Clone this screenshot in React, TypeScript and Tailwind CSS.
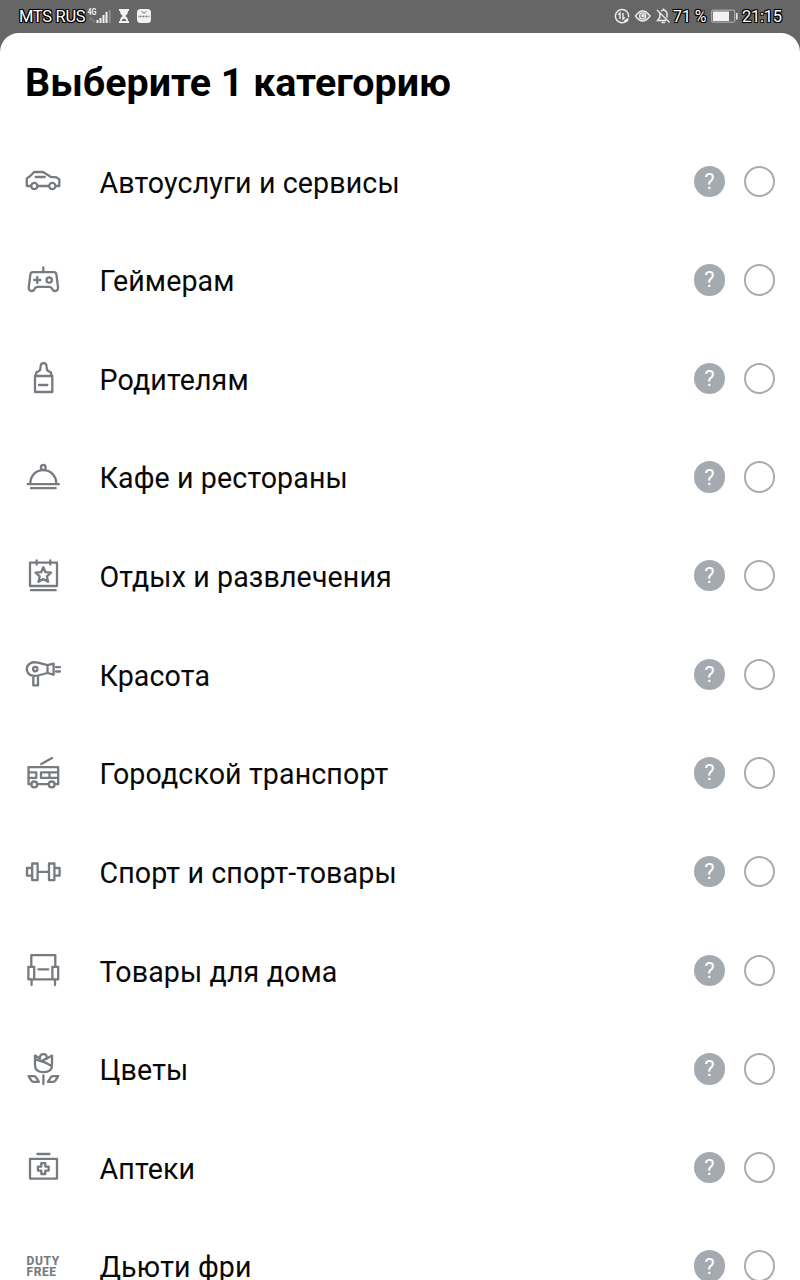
import type { ReactNode } from "react";

const categories: { label: string; icon: ReactNode }[] = [
  {
    label: "Автоуслуги и сервисы",
    icon: (
      <>
        <path d="M6 23H1.8V15.4L5 13.2L9.2 9H18L25.6 13.8L31.5 14.4L34.3 16.4V23H30.5M12.6 23H24" />
        <path d="M10.7 14H19.7" />
        <circle cx="9.3" cy="23" r="3.1" />
        <circle cx="27.3" cy="23" r="3.1" />
      </>
    ),
  },
  {
    label: "Геймерам",
    icon: (
      <>
        <path d="M18.3 5.4V10M8 10.2H28.8Q31 10.2 31.4 12.4L33 25Q33.4 29 30 29Q28.4 29 27.6 27.6L26.6 26Q25.8 24.9 24.4 24.9H12.4Q11 24.9 10.2 26L9.2 27.6Q8.4 29 6.8 29Q3.4 29 3.8 25L5.4 12.4Q5.8 10.2 8 10.2Z" />
        <path d="M9.2 18H15.4M12.3 14.9V21.1" />
        <circle cx="24.2" cy="18" r="2.7" />
      </>
    ),
  },
  {
    label: "Родителям",
    icon: (
      <>
        <path d="M10 16H27.3V32H10ZM14 25H22.3" />
        <path d="M11 16V14Q11 11.6 13.2 11.3C15.8 10.8 15.2 9.2 15.6 6.4Q15.8 3.2 18.6 3.2Q21.4 3.2 21.6 6.4C22 9.2 21.4 10.8 24 11.3Q26.2 11.6 26.2 14V16" />
      </>
    ),
  },
  {
    label: "Кафе и рестораны",
    icon: (
      <>
        <path d="M2.8 25.2H33.8M5.3 25C5.3 6.6 31.3 6.6 31.3 25M6 29.2H30.7" />
        <circle cx="18.3" cy="8.4" r="2.4" />
      </>
    ),
  },
  {
    label: "Отдых и развлечения",
    icon: (
      <>
        <path d="M5 4.6H32V28H5ZM11.7 2.4V6.6M25.3 2.4V6.6M6 32.2H30.7" />
        <path d="M18.3 9.2L20.5 14.2L26 14.7L21.9 18.3L23.1 23.8L18.3 20.9L13.5 23.8L14.7 18.3L10.6 14.7L16.1 14.2Z" />
      </>
    ),
  },
  {
    label: "Красота",
    icon: (
      <>
        <path d="M22.5 9.2L13 6.7C6.5 5.1 1.8 8.2 1.8 13.1C1.8 18 6.5 21.1 13 19.5L22.5 17M22.5 9.2V17L28.6 18.6V7.6ZM31 11.1H35M31 15.5H35M8.3 20V29.4H13V20" />
        <circle cx="10.3" cy="13.1" r="2.2" />
      </>
    ),
  },
  {
    label: "Городской транспорт",
    icon: (
      <>
        <path d="M16.3 9.1L27 3.1M6 29.2H3.5V12.2H33.2V29.2H30M12.6 29.2H23.4M3.5 17.4H11.3V22.9H3.5M33.2 17.4H16V22.9H33.2M24.5 17.4V22.9" />
        <circle cx="9.3" cy="29.4" r="2.9" />
        <circle cx="26.7" cy="29.4" r="2.9" />
      </>
    ),
  },
  {
    label: "Спорт и спорт-товары",
    icon: (
      <path d="M7.2 9.5H12.6V26.2H7.2ZM24 9.5H29.4V26.2H24ZM7.2 14H2V21.6H7.2M29.4 14H34.6V21.6H29.4M12.6 17.8H24" />
    ),
  },
  {
    label: "Товары для дома",
    icon: (
      <path d="M6.3 14.8V3.2H30.3V14.8M3.4 14.8H9.2V27.4H3.4ZM27.4 14.8H33.2V27.4H27.4ZM9.2 27.4H27.4M6.6 27.4V33M30 27.4V33M13.3 17.3H23.3" />
    ),
  },
  {
    label: "Цветы",
    icon: (
      <>
        <path d="M15 7.4L10 4.6V13.7Q10 21.2 18.5 21.2Q27 21.2 27 13.7V4.6L21.8 7.4L16 10.2M10 7.6Q12 9.2 15 9.8Q20 10.8 26.6 15" />
        <path d="M15 7.4Q14.6 3.2 18.4 3.2Q22.2 3.2 21.8 7.4" />
        <path d="M18.4 24.3V33M3.6 25.1H8.5Q10.5 25.1 11.4 26.8L13.8 30.9H9Q7 30.9 6.1 29.2ZM33.2 25.1H28.3Q26.3 25.1 25.4 26.8L23 30.9H27.8Q29.8 30.9 30.7 29.2Z" />
      </>
    ),
  },
  {
    label: "Аптеки",
    icon: (
      <path d="M12.3 5H24.4M5 9.8H32V29.6H5ZM16.3 14.2H20.3V17.6H23.7V21.6H20.3V25H16.3V21.6H12.9V17.6H16.3Z" />
    ),
  },
  { label: "Дьюти фри", icon: null },
];

const outlined =
  "[text-shadow:1px_1px_0_#000,-1px_-1px_0_#000,1px_-1px_0_#000,-1px_1px_0_#000,0_0_2px_#000]";

function StatusBar() {
  return (
    <header className="flex h-8 shrink-0 items-center justify-between pl-[19px] pr-[18px] text-[16px] leading-8 text-white">
      <div className="flex items-center">
        <span className={`w-[68px] whitespace-nowrap pt-px text-[16.5px] tracking-[-0.3px] ${outlined}`}>MTS RUS</span>
        <svg className="h-8 w-[24px]" viewBox="87 0 24 32" fill="#f2f2f2">
          <text x="87.5" y="15" fontSize="9" fontWeight="700" textLength="9" lengthAdjust="spacingAndGlyphs" fontFamily="Roboto">4G</text>
          <path d="M96.5 20h2v3h-2zM99.5 18h2v5h-2zM102.5 15h2v8h-2zM105.5 12h2v11h-2z" />
          <path d="M108.8 10h1.8v13h-1.8z" opacity=".3" />
          <path d="M89 19.5l2-2 2 2zM92 20.5l2 2 1-2z" opacity=".3" />
        </svg>
        <svg className="ml-[7px] h-8 w-3" viewBox="118 0 12 32" fill="#f2f2f2">
          <path d="M119 9h10v2h-1c0 3-1.6 4-2.8 5c1.2 1 2.8 2 2.8 5h1v2h-10v-2h1c0-3 1.6-4 2.8-5c-1.2-1-2.8-2-2.8-5h-1z" />
          <path d="M121.5 21q.5-2 2.5-2.5q2 .5 2.5 2.5z" fill="#666" />
        </svg>
        <svg className="ml-[6px] h-8 w-4" viewBox="136 0 16 32">
          <rect x="137" y="9" width="14" height="14" rx="3.5" fill="#f2f2f2" />
          <path d="M141.5 11.5q2.5 3 5 0" stroke="#777" fill="none" />
          <path d="M138.5 16.5h11" stroke="#777" strokeWidth="1.5" strokeDasharray="1 .5" />
        </svg>
      </div>
      <div className="flex items-center">
        <svg className="h-8 w-[58px]" viewBox="614 0 58 32" fill="none" stroke="#eee" strokeWidth="1.4">
          <path d="M627 20.5a6.6 6.6 0 1 1 1.6-3.5M620 19v-6l-1.700 1.700M623 13v6l1.700-1.700" />
          <path d="M624 20.5l4.500-3v2.500q-1 2.500-4.500 2.500z" fill="#eee" stroke="none" />
          <path d="M635.5 16q7-10 14.500 0q-7.500 10-14.500 0z" />
          <circle cx="642.7" cy="16" r="3.1" />
          <circle cx="643" cy="15.8" r="1.8" fill="#eee" stroke="none" />
          <path d="M657 10l12.500 12.500M659.8 13.500v4l-2.300 3h8.500M661 11q4-2.500 6 2v4.500M661.5 22.500h3.500M663.5 8.500v1.500" />
        </svg>
        <span className={`ml-px w-[35px] whitespace-nowrap pt-px text-[16px] tracking-[-0.1px] ${outlined}`}>71 %</span>
        <svg className="ml-[2px] h-8 w-7" viewBox="710 0 28 32">
          <rect x="711.7" y="10.2" width="23" height="12" rx="1.5" fill="none" stroke="#aaa" strokeWidth="1.2" />
          <rect x="713" y="11.500" width="16" height="9.500" fill="#f2f2f2" />
          <path d="M736.8 13v6.500" stroke="#eee" strokeWidth="1.5" />
        </svg>
        <span className={`ml-[4px] w-10 whitespace-nowrap pt-px text-[16.5px] tracking-[-0.25px] ${outlined}`}>21:15</span>
      </div>
    </header>
  );
}

export default function App() {
  return (
    <div className="flex h-[1280px] w-[800px] flex-col overflow-hidden bg-[#666] font-[Roboto,sans-serif]">
      <StatusBar />
      <main className="mt-px flex-1 overflow-hidden rounded-t-[19px] bg-white">
        <h1 className="h-[98.9px] pl-[25px] pt-[26px] text-[39.4px] font-bold leading-[48px] text-black">
          Выберите 1 категорию
        </h1>
        <ul>
          {categories.map(({ label, icon }) => (
            <li key={label} className="flex h-[98.64px] items-center pl-[25px] pr-[25px]">
              {icon ? (
                <svg
                  className="size-9 shrink-0"
                  viewBox="0 0 36 36"
                  fill="none"
                  stroke="#777b80"
                  strokeWidth="2.3"
                  strokeLinejoin="round"
                  strokeLinecap="round"
                >
                  {icon}
                </svg>
              ) : (
                <span className="w-9 shrink-0 whitespace-nowrap pl-[1.5px] pt-[2px] font-['Roboto'] text-[12px] font-extrabold leading-[11.5px] tracking-[0.6px] text-[#777b80]">
                  DUTY
                  <br />
                  FREE
                </span>
              )}
              <span className="ml-[38.5px] flex-1 pt-[2.6px] text-[28.6px] leading-9 tracking-[0.12px] text-[#080808]">
                {label}
              </span>
              <span className="flex size-[31.4px] items-center justify-center rounded-full bg-[#a5aab1] pt-px font-['Roboto'] text-[22px] font-normal leading-8 text-white">
                ?
              </span>
              <span className="ml-[18.5px] size-[31.4px] rounded-full border-2 border-[#a9adb2]" />
            </li>
          ))}
        </ul>
      </main>
    </div>
  );
}
